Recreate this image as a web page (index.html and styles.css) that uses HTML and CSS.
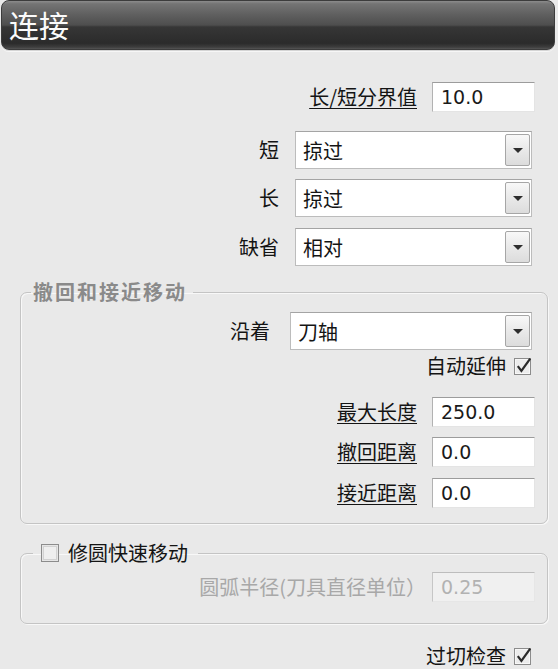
FILE: index.html
```html
<!DOCTYPE html>
<html lang="zh">
<head>
<meta charset="utf-8">
<link rel="stylesheet" href="styles.css">
</head>
<body>
<div class="title">连接</div>
<div class="main">
  <div class="row pr r1"><span class="lbl u">长/短分界值</span><span class="input">10.0</span></div>
  <div class="row pr r2"><span class="lbl">短</span><div class="select"><span>掠过</span><span class="arrow"></span></div></div>
  <div class="row pr r3"><span class="lbl">长</span><div class="select"><span>掠过</span><span class="arrow"></span></div></div>
  <div class="row pr r4"><span class="lbl">缺省</span><div class="select"><span>相对</span><span class="arrow"></span></div></div>

  <fieldset class="grp g1">
    <legend>撤回和接近移动</legend>
    <div class="row g1r1"><span class="lbl">沿着</span><div class="select wide"><span>刀轴</span><span class="arrow"></span></div></div>
    <div class="row chk g1r2"><span class="lbl">自动延伸</span>
      <svg class="cb" width="18" height="18" viewBox="0 0 18 18"><rect x="0.5" y="1.5" width="16" height="16" fill="#ececec" stroke="#8c8c8c"/><rect x="1.5" y="2.5" width="14" height="14" fill="none" stroke="#f7f7f7"/><path d="M3.8 9.2 L7.4 14 L16.2 1.6" fill="none" stroke="#2a2a2a" stroke-width="2.2"/></svg>
    </div>
    <div class="row g1r3"><span class="lbl u">最大长度</span><span class="input">250.0</span></div>
    <div class="row g1r4"><span class="lbl u">撤回距离</span><span class="input">0.0</span></div>
    <div class="row g1r5"><span class="lbl u">接近距离</span><span class="input">0.0</span></div>
  </fieldset>

  <fieldset class="grp g2">
    <legend><svg class="cb0" width="18" height="18" viewBox="0 0 18 18"><rect x="0.5" y="0.5" width="17" height="17" fill="#e6e6e6" stroke="#8c8c8c"/><rect x="2.5" y="2.5" width="13" height="13" fill="#efefef" stroke="#d2d2d2"/></svg><span>修圆快速移动</span></legend>
    <div class="row g2r1"><span class="lbl dis">圆弧半径(刀具直径单位）</span><span class="input disabled">0.25</span></div>
  </fieldset>

  <div class="row pr chk last"><span class="lbl">过切检查</span>
    <svg class="cb" width="18" height="18" viewBox="0 0 18 18"><rect x="0.5" y="1.5" width="16" height="16" fill="#ececec" stroke="#8c8c8c"/><rect x="1.5" y="2.5" width="14" height="14" fill="none" stroke="#f7f7f7"/><path d="M3.8 9.2 L7.4 14 L16.2 1.6" fill="none" stroke="#2a2a2a" stroke-width="2.2"/></svg>
  </div>
</div>
</body>
</html>
```
FILE: styles.css
```css
html, body {
  margin: 0;
  padding: 0;
}
body {
  width: 558px;
  height: 669px;
  overflow: hidden;
  background: #e9e9e9;
  font-family: "Noto Sans CJK SC", sans-serif;
  font-size: 20px;
  color: #141414;
}
.title {
  margin: 0 3px 0 1px;
  height: 48px;
  border: 1px solid #3c3c3c;
  border-radius: 8px;
  background: linear-gradient(#8c8c8c 0, #747474 6%, #5e5e5e 30%, #4e4e4e 50%, #363636 54%, #2b2b2b 88%, #3d3d3d 96%, #555 100%);
  color: #fbfbfb;
  font-size: 30px;
  line-height: 46px;
  padding-left: 7px;
  box-shadow: 0 1px 0 #d4d4d4, 0 2px 0 #f6f6f6;
}
.main {
  display: flex;
  flex-direction: column;
}
.row {
  display: flex;
  justify-content: flex-end;
  align-items: center;
}
.pr {
  padding-right: 23px;
}
.lbl {
  line-height: 24px;
  white-space: nowrap;
}
.u {
  text-decoration: underline;
  text-underline-offset: 3px;
  text-decoration-thickness: 1px;
}
.dis {
  color: #a8a8a8;
}
.input {
  box-sizing: border-box;
  width: 103px;
  height: 30px;
  margin-left: 15px;
  background: #fff;
  border: 1px solid;
  border-color: #9c9c9c #e4e4e4 #e4e4e4 #b2b2b2;
  font-family: "DejaVu Sans", sans-serif;
  font-size: 19px;
  line-height: 28px;
  padding-left: 8px;
  color: #1a1a1a;
}
.input.disabled {
  background: #f0f0f0;
  color: #b2b2b2;
  border-color: #bdbdbd #e6e6e6 #e6e6e6 #c6c6c6;
  margin-left: 6px;
}
.select {
  box-sizing: border-box;
  width: 237px;
  height: 38px;
  margin-left: 16px;
  margin-right: 3px;
  background: #fff;
  border: 1px solid #bcbcbc;
  border-top-color: #a4a4a4;
  display: flex;
  align-items: center;
  justify-content: space-between;
  padding: 0 1px 0 7px;
}
.select.wide {
  width: 242px;
  margin-left: 20px;
}
.arrow {
  box-sizing: border-box;
  width: 25px;
  height: 32px;
  border: 1px solid #a6a6a6;
  border-radius: 2px;
  background: linear-gradient(#f8f8f8, #e9e9e9 50%, #dcdcdc);
  display: flex;
  align-items: center;
  justify-content: center;
}
.arrow::after {
  content: "";
  width: 0;
  height: 0;
  border-left: 5px solid transparent;
  border-right: 5px solid transparent;
  border-top: 5px solid #2e2e2e;
  margin-top: 1px;
}
.r1 { margin-top: 32px; height: 30px; }
.r2 { margin-top: 19px; }
.r3 { margin-top: 10px; }
.r4 { margin-top: 11px; }

.grp {
  margin: 0 10px 0 20px;
  border: 1px solid #c4c4c4;
  border-radius: 7px;
  box-shadow: inset 1px 1px 0 #f8f8f8, 1px 1px 0 #f8f8f8;
  min-width: 0;
}
.g1 {
  margin-top: 14px;
  padding: 0 12px 15px 10px;
}
.g1 legend {
  padding: 0 6px 0 2px;
  line-height: 24px;
  font-weight: bold;
  color: #8a8a8a;
  letter-spacing: 2px;
}
.g1r1 { margin-top: 8px; }
.chk { height: 22px; }
.chk .lbl { line-height: 22px; }
.cb { margin-left: 8px; margin-right: 3px; }
.g1r2 { margin-top: 5px; }
.g1r3 { margin-top: 20px; }
.g1r4 { margin-top: 10px; }
.g1r5 { margin-top: 11px; }

.g2 {
  margin-top: 17px;
  padding: 0 12px 21px 12px;
}
.g2 legend {
  padding: 0 10px 0 8px;
  line-height: 24px;
  display: flex;
  align-items: center;
}
.cb0 { margin-right: 9px; }
.g2r1 { margin-top: 7px; }

.last { margin-top: 21px; }
```
